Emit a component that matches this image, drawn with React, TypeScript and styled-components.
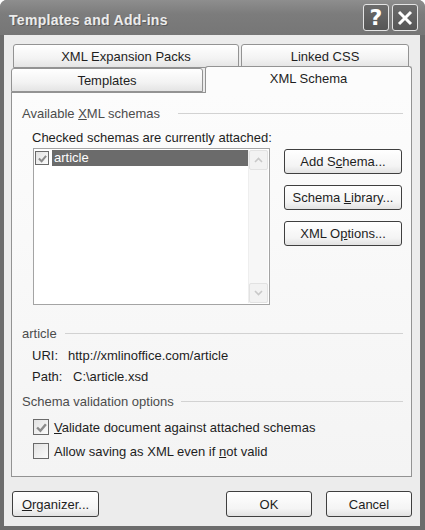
import React from "react";
import styled, { createGlobalStyle } from "styled-components";

const GlobalStyle = createGlobalStyle`
  html, body {
    margin: 0;
    padding: 0;
    background: #ffffff;
  }
  body {
    font-family: "Liberation Sans", Arial, sans-serif;
    font-size: 13px;
    color: #1e1e1e;
  }
`;

const Window = styled.div`
  width: 425px;
  height: 530px;
  box-sizing: border-box;
  display: flex;
  flex-direction: column;
  background: #6c6c6c;
  border-radius: 7px 7px 0 0;
  padding: 0 5px 4px 4px;
  overflow: hidden;
`;

const TitleBar = styled.div`
  height: 35px;
  flex-shrink: 0;
  display: flex;
  align-items: center;
  background: linear-gradient(#8e8e8e, #7c7c7c 40%, #767676);
  margin: 0 -5px 0 -4px;
  padding: 0 7px 0 9px;
`;

const Title = styled.div`
  flex: 1;
  padding-top: 4px;
  font-size: 14px;
  font-weight: bold;
  color: #ececec;
  text-shadow: 1px 1px 0 #5a5a5a;
  letter-spacing: 0.3px;
`;

const CaptionButton = styled.div`
  width: 24px;
  height: 25px;
  margin-left: 3px;
  border: 1px solid #e4e4e4;
  border-radius: 3px;
  background: linear-gradient(#6c6c6c, #565656);
  display: flex;
  align-items: center;
  justify-content: center;
  color: #ffffff;
  font-family: "DejaVu Sans", sans-serif;
  font-weight: bold;
  font-size: 22px;
  line-height: 1;
`;

const Body = styled.div`
  flex: 1;
  display: flex;
  flex-direction: column;
  background: #ececec;
  padding: 9px 8px 9px 7px;
`;

const TabRow = styled.div<{ $pad: string }>`
  display: flex;
  align-items: flex-end;
  gap: 2px;
  height: 24px;
  padding: ${(p) => p.$pad};
`;

const Tab = styled.div<{ $width?: number; $active?: boolean }>`
  box-sizing: border-box;
  ${(p) => (p.$width ? `width: ${p.$width}px;` : "flex: 1;")}
  height: ${(p) => (p.$active ? "27px" : "24px")};
  margin-bottom: ${(p) => (p.$active ? "-1px" : "0")};
  position: relative;
  z-index: ${(p) => (p.$active ? 1 : 0)};
  display: flex;
  align-items: center;
  justify-content: center;
  padding-bottom: ${(p) => (p.$active ? "3px" : "0")};
  border: 1px solid #939393;
  border-bottom: ${(p) => (p.$active ? "none" : "1px solid #939393")};
  border-radius: 3px 3px 0 0;
  background: ${(p) =>
    p.$active ? "#fcfcfc" : "linear-gradient(#ffffff, #f3f3f3 60%, #e4e4e4)"};
  color: #1e1e1e;
`;

const Panel = styled.div`
  height: 385px;
  box-sizing: border-box;
  border: 1px solid #939393;
  background: linear-gradient(#fcfcfc, #f4f4f4);
  padding: 13px 8px 0 10px;
  display: flex;
  flex-direction: column;
`;

const GroupHeader = styled.div<{ $gap: number; $mt?: number }>`
  display: flex;
  align-items: center;
  height: 15px;
  margin-top: ${(p) => p.$mt ?? 0}px;
  color: #4c4c4c;
  &::after {
    content: "";
    flex: 1;
    height: 1px;
    margin-left: ${(p) => p.$gap}px;
    background: #d2d2d2;
  }
`;

const Indented = styled.div<{ $mt: number }>`
  margin-top: ${(p) => p.$mt}px;
  margin-left: 10px;
  line-height: 15px;
  height: 15px;
`;

const ListRow = styled.div`
  display: flex;
  margin-top: 3px;
  margin-left: 11px;
  gap: 14px;
`;

const ListBox = styled.div`
  width: 237px;
  height: 157px;
  box-sizing: border-box;
  border: 1px solid #a4a4a4;
  background: #ffffff;
  display: flex;
  padding: 1px;
`;

const ListItems = styled.div`
  flex: 1;
`;

const ListItem = styled.div`
  display: flex;
  align-items: center;
  height: 16px;
`;

const ItemText = styled.div<{ $selected?: boolean }>`
  flex: 1;
  height: 16px;
  line-height: 16px;
  padding-left: 2px;
  margin-left: 3px;
  background: ${(p) => (p.$selected ? "#6b6b6b" : "transparent")};
  color: ${(p) => (p.$selected ? "#ffffff" : "#1e1e1e")};
`;

const ScrollBar = styled.div`
  width: 19px;
  display: flex;
  flex-direction: column;
  justify-content: space-between;
  background: #f7f7f7;
  border-left: 1px solid #eeeeee;
`;

const ScrollButton = styled.div`
  height: 20px;
  box-sizing: border-box;
  border: 1px solid #e2e2e2;
  border-radius: 2px;
  background: #f2f2f2;
  display: flex;
  align-items: center;
  justify-content: center;
`;

const ButtonColumn = styled.div`
  display: flex;
  flex-direction: column;
  gap: 11px;
  margin-top: 1px;
`;

const Button = styled.div<{ $width: number; $height: number }>`
  box-sizing: border-box;
  width: ${(p) => p.$width}px;
  height: ${(p) => p.$height}px;
  border: 1px solid #3f3f3f;
  border-radius: 3px;
  background: linear-gradient(#ffffff, #f4f4f4 70%, #e2e2e2);
  display: flex;
  align-items: center;
  justify-content: center;
  color: #1e1e1e;
`;

const InfoRow = styled.div<{ $mt: number }>`
  display: flex;
  margin-top: ${(p) => p.$mt}px;
  margin-left: 10px;
  line-height: 15px;
`;

const InfoLabel = styled.span<{ $width: number }>`
  width: ${(p) => p.$width}px;
`;

const CheckRow = styled.div<{ $mt: number }>`
  display: flex;
  align-items: center;
  gap: 5px;
  height: 16px;
  margin-top: ${(p) => p.$mt}px;
  margin-left: 11px;
`;

const Box = styled.div<{ $size: number }>`
  box-sizing: border-box;
  width: ${(p) => p.$size}px;
  height: ${(p) => p.$size}px;
  border: 1px solid #6a6a6a;
  background: linear-gradient(135deg, #e2e2e2, #fbfbfb);
  display: flex;
  align-items: center;
  justify-content: center;
  flex-shrink: 0;
`;

const Footer = styled.div`
  display: flex;
  align-items: center;
  margin-top: 14px;
  padding-left: 1px;
`;

const Spacer = styled.div`
  flex: 1;
`;

const FooterGap = styled.div`
  width: 14px;
`;

const Check = ({ size }: { size: number }) => (
  <svg width={size - 5} height={size - 5} viewBox="0 0 10 10">
    <path d="M1 5 L4 8 L9 2" fill="none" stroke="#8a8a8a" strokeWidth="2.2" />
  </svg>
);

const Chevron = ({ up }: { up?: boolean }) => (
  <svg width="9" height="6" viewBox="0 0 9 6">
    <path
      d={up ? "M1 5 L4.5 1.5 L8 5" : "M1 1 L4.5 4.5 L8 1"}
      fill="none"
      stroke="#c8c8c8"
      strokeWidth="1.6"
    />
  </svg>
);

const CloseGlyph = () => (
  <svg width="18" height="18" viewBox="0 0 18 18">
    <path d="M3 3 L15 15 M15 3 L3 15" stroke="#ffffff" strokeWidth="3" />
  </svg>
);

const App: React.FC = () => {
  return (
    <>
      <GlobalStyle />
      <Window>
        <TitleBar>
          <Title>Templates and Add-ins</Title>
          <CaptionButton>?</CaptionButton>
          <CaptionButton>
            <CloseGlyph />
          </CaptionButton>
        </TitleBar>
        <Body>
          <TabRow $pad="0 3px 0 2px">
            <Tab $width={226}>XML Expansion Packs</Tab>
            <Tab $width={168}>Linked CSS</Tab>
          </TabRow>
          <TabRow $pad="0">
            <Tab $width={192}>Templates</Tab>
            <Tab $active>XML Schema</Tab>
          </TabRow>
          <Panel>
            <GroupHeader $gap={18}>
              <span>
                Available <u>X</u>ML schemas
              </span>
            </GroupHeader>
            <Indented $mt={9}>Checked schemas are currently attached:</Indented>
            <ListRow>
              <ListBox>
                <ListItems>
                  <ListItem>
                    <Box $size={14}>
                      <Check size={14} />
                    </Box>
                    <ItemText $selected>article</ItemText>
                  </ListItem>
                </ListItems>
                <ScrollBar>
                  <ScrollButton>
                    <Chevron up />
                  </ScrollButton>
                  <ScrollButton>
                    <Chevron />
                  </ScrollButton>
                </ScrollBar>
              </ListBox>
              <ButtonColumn>
                <Button $width={118} $height={25}>
                  <span>
                    Add S<u>c</u>hema...
                  </span>
                </Button>
                <Button $width={118} $height={25}>
                  <span>
                    Schema <u>L</u>ibrary...
                  </span>
                </Button>
                <Button $width={118} $height={25}>
                  <span>
                    XML O<u>p</u>tions...
                  </span>
                </Button>
              </ButtonColumn>
            </ListRow>
            <GroupHeader $gap={8} $mt={21}>
              <span>article</span>
            </GroupHeader>
            <InfoRow $mt={7}>
              <InfoLabel $width={36}>URI:</InfoLabel>
              <span>http://xmlinoffice.com/article</span>
            </InfoRow>
            <InfoRow $mt={6}>
              <InfoLabel $width={41}>Path:</InfoLabel>
              <span>C:\article.xsd</span>
            </InfoRow>
            <GroupHeader $gap={7} $mt={10}>
              <span>Schema validation options</span>
            </GroupHeader>
            <CheckRow $mt={10}>
              <Box $size={16}>
                <Check size={16} />
              </Box>
              <span>
                <u>V</u>alidate document against attached schemas
              </span>
            </CheckRow>
            <CheckRow $mt={8}>
              <Box $size={16} />
              <span>
                Allow saving as XML even if <u>n</u>ot valid
              </span>
            </CheckRow>
          </Panel>
          <Footer>
            <Button $width={87} $height={26}>
              <span>
                <u>O</u>rganizer...
              </span>
            </Button>
            <Spacer />
            <Button $width={86} $height={26}>
              OK
            </Button>
            <FooterGap />
            <Button $width={86} $height={26}>
              Cancel
            </Button>
          </Footer>
        </Body>
      </Window>
    </>
  );
};

export default App;
